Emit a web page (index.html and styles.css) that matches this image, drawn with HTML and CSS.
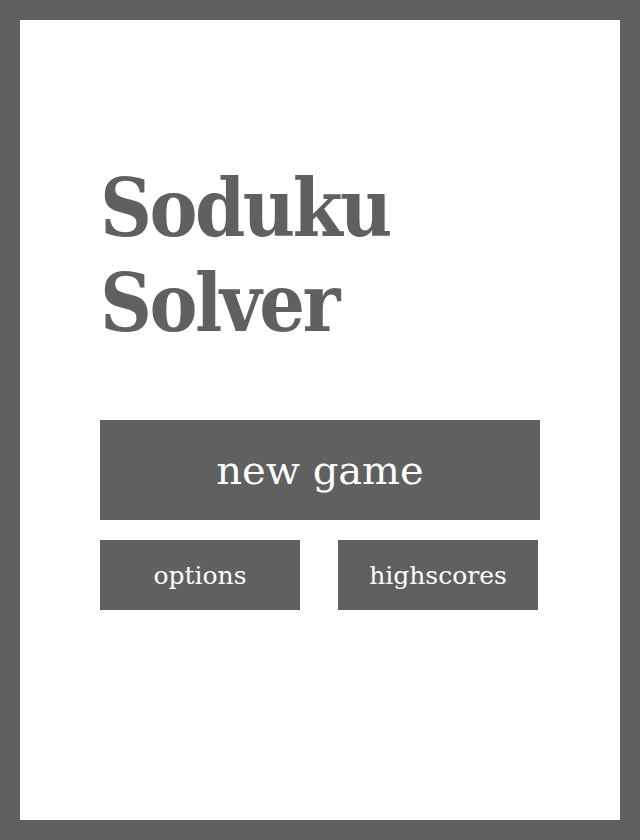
FILE: index.html
```html
<!DOCTYPE html>
<html>
<head>
<meta charset="utf-8">
<link rel="stylesheet" href="styles.css">
</head>
<body>
<div class="frame">
  <main class="screen">
    <h1 class="title">Soduku<br>Solver</h1>
    <div class="menu">
      <button class="btn btn-main">new game</button>
      <div class="row">
        <button class="btn btn-small">options</button>
        <button class="btn btn-small">highscores</button>
      </div>
    </div>
  </main>
</div>
</body>
</html>
```
FILE: styles.css
```css
html, body {
  margin: 0;
  padding: 0;
  background: #606060;
}
.frame {
  width: 640px;
  height: 840px;
  box-sizing: border-box;
  padding: 20px;
  background: #606060;
}
.screen {
  background: #fff;
  height: 800px;
  box-sizing: border-box;
  padding: 141px 80px 0 80px;
  font-family: "DejaVu Serif Condensed", "DejaVu Serif", serif;
}
.title {
  margin: 0;
  height: 201px;
  color: #606060;
  font-family: "DejaVu Serif Condensed", "DejaVu Serif", serif;
  font-size: 80px;
  line-height: 95px;
  font-weight: bold;
  letter-spacing: -2.5px;
}
.menu {
  margin-top: 58px;
  display: flex;
  flex-direction: column;
  gap: 20px;
}
.btn {
  border: 0;
  background: #606060;
  color: #fff;
  font-family: "DejaVu Serif", serif;
  padding: 0;
  margin: 0;
}
.btn-main {
  width: 440px;
  height: 100px;
  font-size: 40px;
}
.row {
  display: flex;
  gap: 38px;
}
.btn-small {
  width: 200px;
  height: 70px;
  font-size: 25px;
}
```
